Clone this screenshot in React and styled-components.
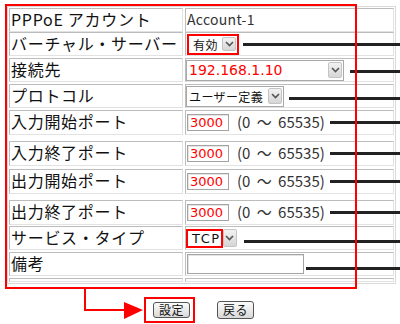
import React from "react"
import styled, { createGlobalStyle } from "styled-components"

const GlobalStyle = createGlobalStyle`
  html, body {
    margin: 0;
    padding: 0;
    background: #fff;
  }
  body {
    width: 400px;
    height: 324px;
    overflow: hidden;
    font-family: "Noto Sans CJK JP", "DejaVu Sans", sans-serif;
  }
`

const Sheet = styled.div`
  position: relative;
  width: 400px;
  height: 324px;
  padding-top: 6px;
  box-sizing: border-box;
`

const Table = styled.div`
  margin-left: 7px;
  width: 389px;
  box-sizing: border-box;
  border: 1px solid #dadada;
  padding: 1px;
  display: flex;
  flex-direction: column;
`

const Row = styled.div`
  display: grid;
  grid-template-columns: 174px 209px;
  column-gap: 2px;
  height: ${(p) => p.$h || 24}px;
  margin-top: ${(p) => (p.$gap === undefined ? 2 : p.$gap)}px;
`

const Cell = styled.div`
  box-sizing: border-box;
  border: 1px solid;
  border-color: #bcbcbc #e2e2e2 #e2e2e2 #bcbcbc;
  display: flex;
  align-items: center;
  min-width: 0;
`

const Label = styled(Cell)`
  padding: 0 0 3px 1px;
  font-size: 16px;
  line-height: 1;
  letter-spacing: 0.7px;
  color: #111;
  white-space: nowrap;
`

const Value = styled(Cell)`
  padding-left: 0;
  font-size: 14px;
  color: #222;
`

const PlainText = styled.span`
  margin-left: 1px;
  padding-bottom: 2px;
  font-size: 14px;
  letter-spacing: 0.3px;
  color: #333;
`

const Leader = styled.span`
  flex: 1;
  height: 3px;
  margin-left: ${(p) => p.$gap || 5}px;
  margin-right: -8px;
  background: #222;
  transform: translateY(${(p) => p.$drop || 0}px);
`

const Mark = styled.span`
  display: inline-flex;
  border: 2px solid #f00;
  margin-left: ${(p) => p.$ml || 0}px;
`

const SelectBox = styled.span`
  display: inline-flex;
  align-items: center;
  box-sizing: border-box;
  width: ${(p) => p.$w}px;
  height: ${(p) => p.$h || 21}px;
  border: ${(p) => (p.$bare ? "none" : "1px solid #a8a8a8")};
  background: #fff;
  padding-right: 1px;
`

const SelectText = styled.span`
  flex: 1;
  padding-left: ${(p) => p.$pad || 2}px;
  font-size: ${(p) => p.$size || 12}px;
  font-family: ${(p) =>
    p.$latin ? '"DejaVu Sans", sans-serif' : '"Noto Sans CJK JP", sans-serif'};
  color: ${(p) => p.$color || "#111"};
  white-space: nowrap;
  letter-spacing: ${(p) => p.$ls || 0}px;
`

const ArrowButton = styled.span`
  display: inline-flex;
  align-items: center;
  justify-content: center;
  width: 14px;
  height: ${(p) => p.$h || 16}px;
  box-sizing: border-box;
  border: 1px solid #c4c4c4;
  border-radius: 2px;
  background: linear-gradient(#f2f2f2, #d6d6d6);
`

const PortInput = styled.input`
  box-sizing: border-box;
  width: ${(p) => p.$w || 42}px;
  height: ${(p) => p.$h || 17}px;
  margin: 0 0 0 1px;
  padding: 0 2px;
  border: 1px solid #a4a4a4;
  box-shadow: inset 1px 1px 0 #e4e4e4;
  font-family: "DejaVu Sans", sans-serif;
  font-size: 13px;
  color: #f00;
  outline: none;
`

const Range = styled.span`
  margin-left: 8px;
  padding-bottom: 2px;
  font-size: 15px;
  color: #333;
  word-spacing: 3px;
  white-space: nowrap;
`

const RedFrame = styled.div`
  position: absolute;
  left: 5px;
  top: 4px;
  width: 352px;
  height: 285px;
  box-sizing: border-box;
  border: 2px solid #f00;
  pointer-events: none;
`

const Actions = styled.div`
  display: flex;
  align-items: center;
  gap: 22px;
  margin-top: 13px;
  padding-left: 144px;
`

const Callout = styled.span`
  display: inline-flex;
  border: 2px solid #f00;
  padding: 3px 3px 3px 7px;
`

const Button = styled.button`
  height: ${(p) => p.$h || 16}px;
  padding: 0 5px;
  border: 1px solid #555;
  border-radius: 3px;
  background: linear-gradient(#fcfcfc, #d8d8d8);
  font-family: "Noto Sans CJK JP", sans-serif;
  font-size: 12px;
  line-height: 1;
  letter-spacing: 0.5px;
  color: #111;
`

const Pointer = styled.svg`
  position: absolute;
  left: 0;
  top: 286px;
`

const Chevron = () => (
  <svg width="9" height="6" viewBox="0 0 9 6">
    <path d="M1 1 L4.5 4.5 L8 1" fill="none" stroke="#555" strokeWidth="1.6" />
  </svg>
)

const ports = [
  { label: "入力開始ポート", gap: 2 },
  { label: "入力終了ポート", gap: 7 },
  { label: "出力開始ポート", gap: 4 },
  { label: "出力終了ポート", gap: 7 },
]

const App = () => {
  return (
    <Sheet>
      <GlobalStyle />
      <Table>
        <Row $h={22} $gap={0}>
          <Label>PPPoE アカウント</Label>
          <Value>
            <PlainText>Account-1</PlainText>
          </Value>
        </Row>
        <Row>
          <Label>バーチャル・サーバー</Label>
          <Value>
            <Mark $ml={1}>
              <SelectBox $w={48} $h={17} $bare>
                <SelectText $pad={4} $ls={0.5}>
                  有効
                </SelectText>
                <ArrowButton $h={14}>
                  <Chevron />
                </ArrowButton>
              </SelectBox>
            </Mark>
            <Leader $gap={4} />
          </Value>
        </Row>
        <Row>
          <Label>接続先</Label>
          <Value>
            <SelectBox $w={158}>
              <SelectText $latin $size={14} $color="#f00">
                192.168.1.10
              </SelectText>
              <ArrowButton>
                <Chevron />
              </ArrowButton>
            </SelectBox>
            <Leader $gap={6} $drop={1} />
          </Value>
        </Row>
        <Row>
          <Label>プロトコル</Label>
          <Value>
            <SelectBox $w={98}>
              <SelectText $ls={0.4}>ユーザー定義</SelectText>
              <ArrowButton>
                <Chevron />
              </ArrowButton>
            </SelectBox>
            <Leader $gap={5} $drop={2} />
          </Value>
        </Row>
        {ports.map((port) => (
          <Row key={port.label} $gap={port.gap}>
            <Label>{port.label}</Label>
            <Value>
              <PortInput defaultValue="3000" readOnly />
              <Range>(0 ～ 65535)</Range>
              <Leader $gap={5} />
            </Value>
          </Row>
        ))}
        <Row>
          <Label>サービス・タイプ</Label>
          <Value>
            <SelectBox $w={53} $h={20} $bare>
              <Mark>
                <SelectText $latin $size={13} $pad={4} $ls={1.5}>
                  TCP
                </SelectText>
              </Mark>
              <ArrowButton $h={18}>
                <Chevron />
              </ArrowButton>
            </SelectBox>
            <Leader $gap={5} $drop={3} />
          </Value>
        </Row>
        <Row>
          <Label>備考</Label>
          <Value>
            <PortInput $w={117} $h={20} />
            <Leader $gap={2} $drop={4} />
          </Value>
        </Row>
        <Row $h={4}>
          <Cell />
          <Cell />
        </Row>
      </Table>
      <Actions>
        <Callout>
          <Button>設定</Button>
        </Callout>
        <Button $h={18}>戻る</Button>
      </Actions>
      <RedFrame />
      <Pointer width="150" height="38" viewBox="0 0 150 38">
        <path d="M85 2 V24 H128" fill="none" stroke="#f00" strokeWidth="2" />
        <polygon points="124,16 143,24 124,33" fill="#f00" />
      </Pointer>
    </Sheet>
  )
}

export default App
